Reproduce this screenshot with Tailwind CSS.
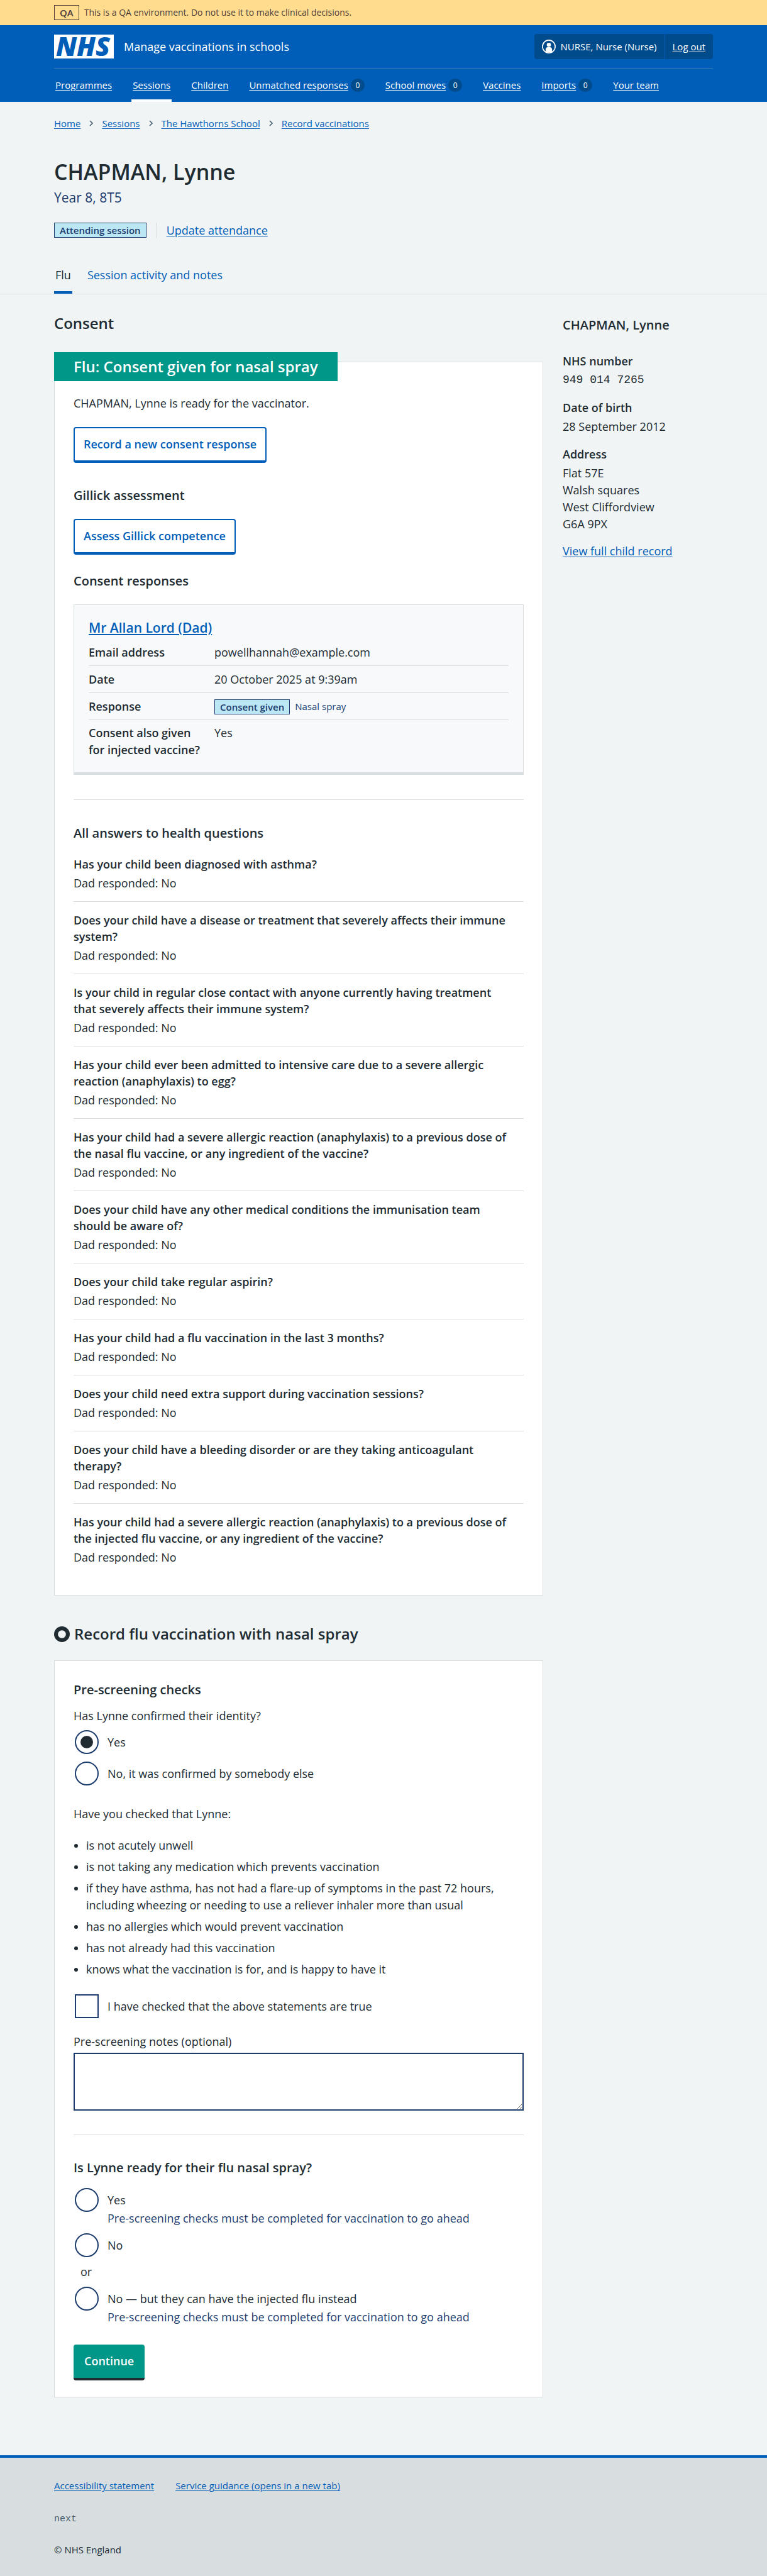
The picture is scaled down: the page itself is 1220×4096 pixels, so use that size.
<!DOCTYPE html>
<html lang="en">
<head>
<meta charset="utf-8">
<meta name="viewport" content="width=device-width, initial-scale=1">
<title>CHAPMAN, Lynne – Manage vaccinations in schools</title>
<script src="https://cdn.jsdelivr.net/npm/@tailwindcss/browser@4"></script>
</head>
<body class="min-h-screen flex flex-col bg-[#f0f4f5] text-[#212b32] font-['Open_Sans','Noto_Sans',sans-serif] text-[18px] leading-[27px]">

<!-- Environment banner -->
<div class="bg-[#ffdc8e] text-[#4d3e3c]">
  <div class="mx-auto w-full max-w-[1048px] h-10 flex items-center gap-2 text-[14px] leading-5">
    <strong class="border border-[#4d3e3c] h-6 px-2 leading-[22px] text-[15px] font-semibold">QA</strong>
    <span>This is a QA environment. Do not use it to make clinical decisions.</span>
  </div>
</div>

<!-- Header -->
<header class="bg-[#005eb8] text-white">
  <div class="mx-auto w-full max-w-[1048px]">
    <div class="h-[69px] flex items-center justify-between border-b border-[#3a7cb8]">
      <a href="#" class="flex items-center gap-4">
        <svg class="w-[95px] h-[38px] overflow-visible" viewBox="0 0 95 38" role="img" aria-label="NHS"><rect width="95" height="38" fill="#fff"/><text x="46" y="34" text-anchor="middle" fill="#005eb8" class="text-[42px] font-extrabold italic">NHS</text></svg>
        <span class="font-medium">Manage vaccinations in schools</span>
      </a>
      <div class="bg-[#004b8c] rounded-[4px] h-10 flex items-stretch text-[15px] font-medium">
        <span class="flex items-center gap-2 px-3 border-r border-[#005eb8]">
          <svg class="w-[22px] h-[22px]" viewBox="0 0 24 24" aria-hidden="true"><circle cx="12" cy="12" r="11" fill="none" stroke="#fff" stroke-width="1.8"/><circle cx="12" cy="9" r="3.6" fill="#fff"/><path d="M6.5 20.5V16.5c0-2 1.600-3.500 3.500-3.500h4c1.900 0 3.500 1.500 3.500 3.500v4c-3.200 2.400-7.800 2.400-11 0z" fill="#fff"/></svg>
          NURSE, Nurse (Nurse)
        </span>
        <a href="#" class="flex items-center px-3 underline underline-offset-2">Log out</a>
      </div>
    </div>
    <nav class="h-[53px] flex justify-start gap-[29px] text-[15px] font-medium">
      <a href="#" class="flex items-center px-[2px] border-y-4 border-transparent"><span class="underline underline-offset-2">Programmes</span></a>
      <a href="#" class="flex items-center px-[2px] border-y-4 border-t-transparent border-b-white"><span class="underline underline-offset-2">Sessions</span></a>
      <a href="#" class="flex items-center px-[2px] border-y-4 border-transparent"><span class="underline underline-offset-2">Children</span></a>
      <a href="#" class="flex items-center gap-1 px-[2px] border-y-4 border-transparent"><span class="underline underline-offset-2">Unmatched responses</span><span class="bg-[#004b8c] rounded-full w-[22px] h-[21px] text-center text-[12px] leading-[21px]">0</span></a>
      <a href="#" class="flex items-center gap-1 px-[2px] border-y-4 border-transparent"><span class="underline underline-offset-2">School moves</span><span class="bg-[#004b8c] rounded-full w-[22px] h-[21px] text-center text-[12px] leading-[21px]">0</span></a>
      <a href="#" class="flex items-center px-[2px] border-y-4 border-transparent"><span class="underline underline-offset-2">Vaccines</span></a>
      <a href="#" class="flex items-center gap-1 px-[2px] border-y-4 border-transparent"><span class="underline underline-offset-2">Imports</span><span class="bg-[#004b8c] rounded-full w-[22px] h-[21px] text-center text-[12px] leading-[21px]">0</span></a>
      <a href="#" class="flex items-center px-[2px] border-y-4 border-transparent"><span class="underline underline-offset-2">Your team</span></a>
    </nav>
  </div>
</header>

<!-- Page heading -->
<div class="border-b border-[#d8dde0]">
  <div class="mx-auto w-full max-w-[1048px]">
    <nav aria-label="Breadcrumb" class="pt-[23px] flex items-center gap-[14px] text-[15px] leading-[22px] text-[#005eb8]">
      <a href="#" class="underline underline-offset-2">Home</a>
      <svg class="w-[6px] h-[10px]" viewBox="0 0 6 10" aria-hidden="true"><path d="M1 1l4 4-4 4" fill="none" stroke="#4c6272" stroke-width="1.600"/></svg>
      <a href="#" class="underline underline-offset-2">Sessions</a>
      <svg class="w-[6px] h-[10px]" viewBox="0 0 6 10" aria-hidden="true"><path d="M1 1l4 4-4 4" fill="none" stroke="#4c6272" stroke-width="1.600"/></svg>
      <a href="#" class="underline underline-offset-2">The Hawthorns School</a>
      <svg class="w-[6px] h-[10px]" viewBox="0 0 6 10" aria-hidden="true"><path d="M1 1l4 4-4 4" fill="none" stroke="#4c6272" stroke-width="1.600"/></svg>
      <a href="#" class="underline underline-offset-2">Record vaccinations</a>
    </nav>
    <h1 class="mt-[43px] text-[34px] leading-[46px] font-semibold">CHAPMAN, Lynne</h1>
    <p class="mt-[2px] text-[21px] leading-8 text-[#1d3c6e]">Year 8, 8T5</p>
    <div class="mt-6 flex items-center h-6">
      <strong class="border border-[#1d3c6e] bg-[#bbe7f4] text-[#1d3c6e] h-6 px-2 text-[15px] leading-[22px] font-semibold">Attending session</strong>
      <span class="ml-[15px] pl-4 border-l border-[#d8dde0] h-6 leading-6 font-medium"><a href="#" class="text-[#005eb8] underline underline-offset-2">Update attendance</a></span>
    </div>
    <nav aria-label="Secondary" class="mt-[46px] flex gap-[22px] font-medium">
      <a href="#" class="px-[2px] pb-3 border-b-4 border-[#005eb8]">Flu</a>
      <a href="#" class="px-[2px] pb-3 border-b-4 border-transparent text-[#005eb8]">Session activity and notes</a>
    </nav>
  </div>
</div>

<main class="mx-auto w-full max-w-[1048px] pt-7 pb-[92px] grid grid-cols-[minmax(0,778px)_minmax(0,1fr)] gap-[31px] font-medium">
  <div>
    <h2 class="text-[24px] leading-9 font-semibold">Consent</h2>

    <section class="mt-[43px] border border-[#d8dde0] bg-white px-[30px] pb-[46px]">
      <h3 class="-mt-4 -ml-[31px] w-fit h-[46px] bg-[#009688] text-white px-[31px] text-[24px] leading-[46px] font-semibold">Flu: Consent given for nasal spray</h3>
      <p class="mt-[22px]">CHAPMAN, Lynne is ready for the vaccinator.</p>
      <button type="button" class="mt-6 block h-[57px] px-[14px] bg-white border-2 border-b-4 border-[#005eb8] rounded-[4px] text-[#005eb8] font-semibold">Record a new consent response</button>

      <h3 class="mt-9 text-[20px] leading-8 font-semibold">Gillick assessment</h3>
      <button type="button" class="mt-[21px] block h-[57px] px-[14px] bg-white border-2 border-b-4 border-[#005eb8] rounded-[4px] text-[#005eb8] font-semibold">Assess Gillick competence</button>

      <h3 class="mt-[26px] text-[20px] leading-8 font-semibold">Consent responses</h3>
      <div class="mt-[21px] border border-b-4 border-[#d8dde0] bg-[#f8f9fb] px-[23px] pt-5 pb-[22px]">
        <h4 class="text-[21px] leading-8 font-semibold"><a href="#" class="text-[#005eb8] underline underline-offset-2 decoration-2">Mr Allan Lord (Dad)</a></h4>
        <dl class="mt-[2px]">
          <div class="grid grid-cols-[200px_1fr] pt-2 pb-[7px] border-b border-[#d8dde0]"><dt class="font-semibold">Email address</dt><dd>powellhannah@example.com</dd></div>
          <div class="grid grid-cols-[200px_1fr] pt-2 pb-[7px] border-b border-[#d8dde0]"><dt class="font-semibold">Date</dt><dd>20 October 2025 at 9:39am</dd></div>
          <div class="grid grid-cols-[200px_1fr] pt-2 pb-[7px] border-b border-[#d8dde0]"><dt class="font-semibold">Response</dt><dd class="flex items-center gap-2"><strong class="border border-[#1d3c6e] bg-[#bbe7f4] text-[#1d3c6e] h-6 px-2 text-[15px] leading-[22px] font-semibold">Consent given</strong><span class="text-[15px] font-normal text-[#1d3c6e]">Nasal spray</span></dd></div>
          <div class="grid grid-cols-[200px_1fr] pt-[7px]"><dt class="font-semibold">Consent also given<br>for injected vaccine?</dt><dd>Yes</dd></div>
        </dl>
      </div>

      <hr class="mt-[39px] border-[#d8dde0]">

      <h3 class="mt-[37px] text-[20px] leading-8 font-semibold">All answers to health questions</h3>
      <dl class="mt-1">
        <div class="pt-4 pb-[15px] border-b border-[#d8dde0]"><dt class="font-semibold leading-[26px]">Has your child been diagnosed with asthma?</dt><dd class="mt-1">Dad responded: No</dd></div>
        <div class="pt-4 pb-[15px] border-b border-[#d8dde0]"><dt class="font-semibold leading-[26px]">Does your child have a disease or treatment that severely affects their immune<br>system?</dt><dd class="mt-1">Dad responded: No</dd></div>
        <div class="pt-4 pb-[15px] border-b border-[#d8dde0]"><dt class="font-semibold leading-[26px]">Is your child in regular close contact with anyone currently having treatment<br>that severely affects their immune system?</dt><dd class="mt-1">Dad responded: No</dd></div>
        <div class="pt-4 pb-[15px] border-b border-[#d8dde0]"><dt class="font-semibold leading-[26px]">Has your child ever been admitted to intensive care due to a severe allergic<br>reaction (anaphylaxis) to egg?</dt><dd class="mt-1">Dad responded: No</dd></div>
        <div class="pt-4 pb-[15px] border-b border-[#d8dde0]"><dt class="font-semibold leading-[26px]">Has your child had a severe allergic reaction (anaphylaxis) to a previous dose of<br>the nasal flu vaccine, or any ingredient of the vaccine?</dt><dd class="mt-1">Dad responded: No</dd></div>
        <div class="pt-4 pb-[15px] border-b border-[#d8dde0]"><dt class="font-semibold leading-[26px]">Does your child have any other medical conditions the immunisation team<br>should be aware of?</dt><dd class="mt-1">Dad responded: No</dd></div>
        <div class="pt-4 pb-[15px] border-b border-[#d8dde0]"><dt class="font-semibold leading-[26px]">Does your child take regular aspirin?</dt><dd class="mt-1">Dad responded: No</dd></div>
        <div class="pt-4 pb-[15px] border-b border-[#d8dde0]"><dt class="font-semibold leading-[26px]">Has your child had a flu vaccination in the last 3 months?</dt><dd class="mt-1">Dad responded: No</dd></div>
        <div class="pt-4 pb-[15px] border-b border-[#d8dde0]"><dt class="font-semibold leading-[26px]">Does your child need extra support during vaccination sessions?</dt><dd class="mt-1">Dad responded: No</dd></div>
        <div class="pt-4 pb-[15px] border-b border-[#d8dde0]"><dt class="font-semibold leading-[26px]">Does your child have a bleeding disorder or are they taking anticoagulant<br>therapy?</dt><dd class="mt-1">Dad responded: No</dd></div>
        <div class="pt-4"><dt class="font-semibold leading-[26px]">Has your child had a severe allergic reaction (anaphylaxis) to a previous dose of<br>the injected flu vaccine, or any ingredient of the vaccine?</dt><dd class="mt-1">Dad responded: No</dd></div>
      </dl>
    </section>

    <h2 class="mt-[43px] flex items-center gap-[7px] text-[24px] leading-9 font-semibold">
      <svg class="w-[25px] h-[25px]" viewBox="0 0 26 26" aria-hidden="true"><circle cx="13" cy="13" r="9.800" fill="none" stroke="#212b32" stroke-width="6.400"/></svg>
      Record flu vaccination with nasal spray
    </h2>

    <form class="mt-6 border border-[#d8dde0] bg-white px-[30px] pt-[30px] pb-[26px]">
      <h3 class="text-[20px] leading-8 font-semibold">Pre-screening checks</h3>
      <fieldset>
        <legend class="pt-3">Has Lynne confirmed their identity?</legend>
        <div class="mt-[9px] ml-[2px] flex flex-col gap-3">
          <div class="flex items-center gap-[14px]"><input type="radio" id="id-yes" name="identity" checked class="appearance-none w-[38px] h-[38px] rounded-full border-2 border-[#1d3c6e] bg-white checked:bg-[#212b32] checked:bg-clip-content checked:p-[7px]"><label for="id-yes">Yes</label></div>
          <div class="flex items-center gap-[14px]"><input type="radio" id="id-no" name="identity" class="appearance-none w-[38px] h-[38px] rounded-full border-2 border-[#1d3c6e] bg-white"><label for="id-no">No, it was confirmed by somebody else</label></div>
        </div>
      </fieldset>

      <p class="mt-8">Have you checked that Lynne:</p>
      <ul class="mt-[23px] pl-5 list-disc flex flex-col gap-[7px]">
        <li>is not acutely unwell</li>
        <li>is not taking any medication which prevents vaccination</li>
        <li>if they have asthma, has not had a flare-up of symptoms in the past 72 hours,<br>including wheezing or needing to use a reliever inhaler more than usual</li>
        <li>has no allergies which would prevent vaccination</li>
        <li>has not already had this vaccination</li>
        <li>knows what the vaccination is for, and is happy to have it</li>
      </ul>
      <div class="mt-[26px] ml-[2px] flex items-center gap-[14px]"><input type="checkbox" id="checked" class="appearance-none w-[38px] h-[38px] border-2 border-[#1d3c6e] bg-white"><label for="checked">I have checked that the above statements are true</label></div>

      <label for="notes" class="mt-6 block">Pre-screening notes (optional)</label>
      <textarea id="notes" class="mt-1 block w-full h-[92px] border-2 border-[#1d3c6e] bg-white p-1"></textarea>

      <hr class="mt-[38px] border-[#d8dde0]">

      <fieldset>
        <legend class="pt-9 text-[20px] leading-8 font-semibold">Is Lynne ready for their flu nasal spray?</legend>
        <div class="mt-4 ml-[2px] grid grid-cols-[38px_1fr] gap-x-[14px] items-center">
          <input type="radio" id="r-yes" name="ready" aria-describedby="h-yes" class="appearance-none w-[38px] h-[38px] rounded-full border-2 border-[#1d3c6e] bg-white"><label for="r-yes">Yes</label>
          <p id="h-yes" class="col-start-2 -mt-[3px] text-[#1d3c6e]">Pre-screening checks must be completed for vaccination to go ahead</p>
          <input type="radio" id="r-no" name="ready" class="mt-[10px] appearance-none w-[38px] h-[38px] rounded-full border-2 border-[#1d3c6e] bg-white"><label for="r-no" class="mt-[10px]">No</label>
          <p class="col-span-2 mt-[10px] ml-[9px]">or</p>
          <input type="radio" id="r-inj" name="ready" aria-describedby="h-inj" class="mt-[10px] appearance-none w-[38px] h-[38px] rounded-full border-2 border-[#1d3c6e] bg-white"><label for="r-inj" class="mt-[10px]">No — but they can have the injected flu instead</label>
          <p id="h-inj" class="col-start-2 -mt-[3px] text-[#1d3c6e]">Pre-screening checks must be completed for vaccination to go ahead</p>
        </div>
      </fieldset>
      <button type="submit" class="mt-[30px] block h-[57px] px-[17px] bg-[#009688] text-white font-semibold border-b-4 border-[#212b32] rounded-[4px]">Continue</button>
    </form>
  </div>

  <aside>
    <h2 class="mt-[5px] text-[20px] leading-8 font-semibold">CHAPMAN, Lynne</h2>
    <dl class="mt-7 flex flex-col gap-[17px]">
      <div><dt class="font-semibold">NHS number</dt><dd class="mt-[3px] font-['Liberation_Mono',monospace] font-normal">949 014 7265</dd></div>
      <div><dt class="font-semibold">Date of birth</dt><dd class="mt-[3px]">28 September 2012</dd></div>
      <div><dt class="font-semibold">Address</dt><dd class="mt-[3px]">Flat 57E<br>Walsh squares<br>West Cliffordview<br>G6A 9PX</dd></div>
    </dl>
    <a href="#" class="mt-4 inline-block text-[#005eb8] underline underline-offset-2">View full child record</a>
  </aside>
</main>

<!-- Footer -->
<footer class="grow bg-[#d8dde0] border-t-4 border-[#005eb8] text-[15px] leading-[22px]">
  <div class="mx-auto w-full max-w-[1048px] pt-[33px] pb-[29px]">
    <div class="flex gap-[34px] text-[#005eb8]">
      <a href="#" class="underline underline-offset-2">Accessibility statement</a>
      <a href="#" class="underline underline-offset-2">Service guidance (opens in a new tab)</a>
    </div>
    <p class="mt-8 font-['Liberation_Mono',monospace] text-[#4c6272]">next</p>
    <p class="mt-[26px]">© NHS England</p>
  </div>
</footer>
</body>
</html>
